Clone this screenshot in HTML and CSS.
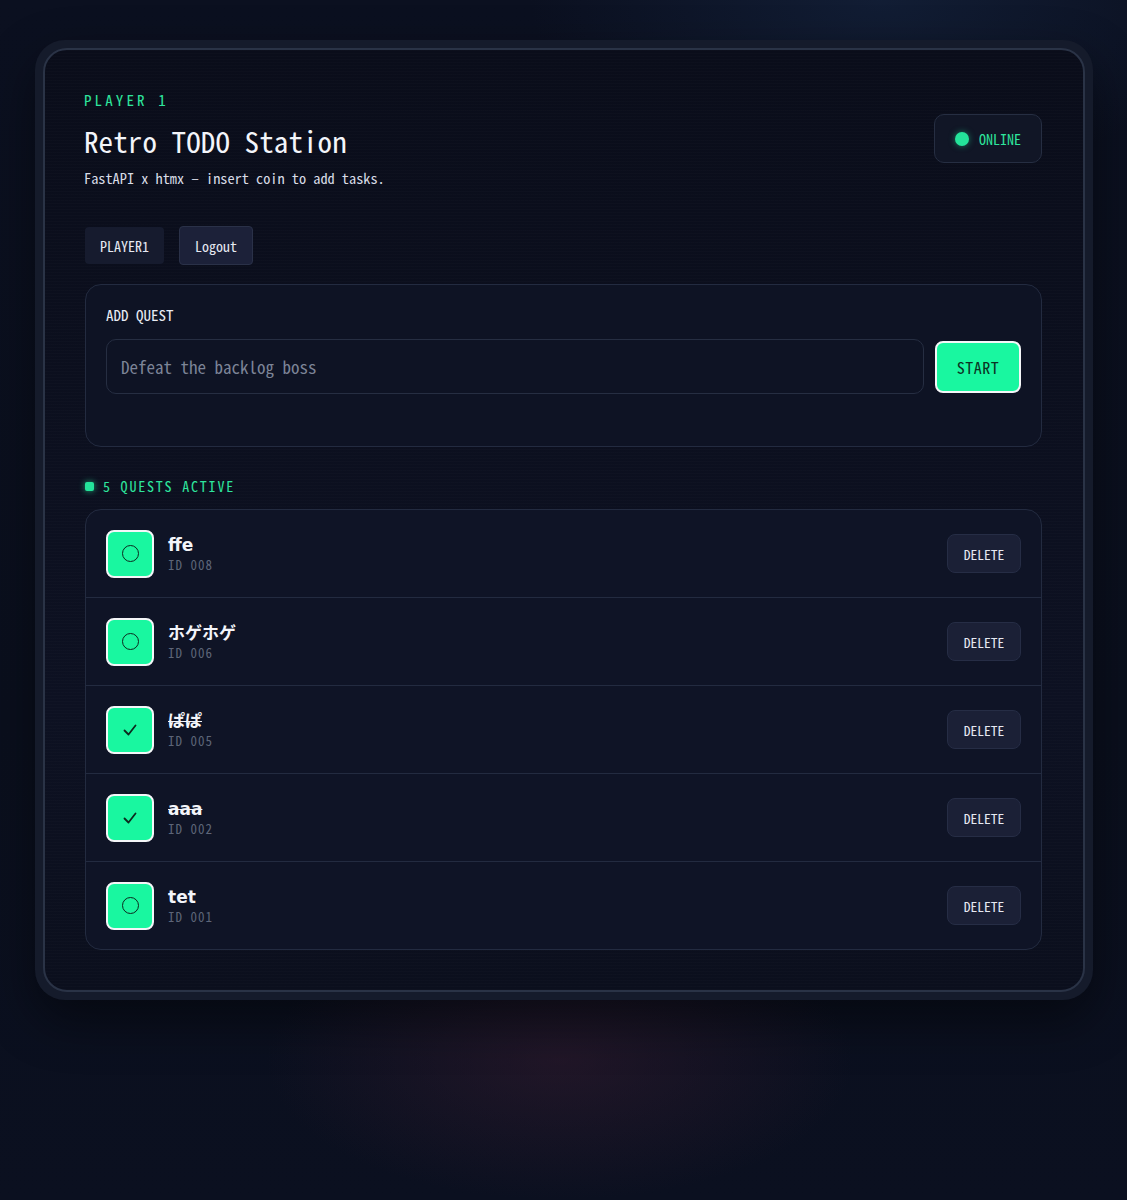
FILE: index.html
```html
<!DOCTYPE html>
<html lang="ja">
<head>
<meta charset="utf-8">
<title>Retro TODO Station</title>
<link rel="stylesheet" href="styles.css">
</head>
<body>
<main class="frame">
  <section class="panel">
    <header class="head">
      <div class="head-text">
        <div class="eyebrow">PLAYER 1</div>
        <h1 class="title">Retro TODO Station</h1>
        <p class="subtitle">FastAPI x htmx – insert coin to add tasks.</p>
      </div>
      <div class="status"><span class="status-dot"></span>ONLINE</div>
    </header>

    <div class="userbar">
      <span class="chip">PLAYER1</span>
      <button class="chip chip-btn">Logout</button>
    </div>

    <form class="add-card">
      <label class="add-label">ADD QUEST</label>
      <div class="add-row">
        <input class="add-input" type="text" placeholder="Defeat the backlog boss">
        <button class="start-btn" type="button">START</button>
      </div>
    </form>

    <div class="count"><span class="count-dot"></span>5 QUESTS ACTIVE</div>

    <ul class="list">
      <li class="item">
        <span class="check"><span class="ring"></span></span>
        <div class="item-text"><div class="item-title">ffe</div><div class="item-id">ID 008</div></div>
        <button class="del">DELETE</button>
      </li>
      <li class="item">
        <span class="check"><span class="ring"></span></span>
        <div class="item-text"><div class="item-title">ホゲホゲ</div><div class="item-id">ID 006</div></div>
        <button class="del">DELETE</button>
      </li>
      <li class="item">
        <span class="check"><svg class="tick" viewBox="0 0 20 20"><path d="M4.5 10.5 L8.5 14.5 L15.5 5.5"/></svg></span>
        <div class="item-text"><div class="item-title done">ぱぱ</div><div class="item-id">ID 005</div></div>
        <button class="del">DELETE</button>
      </li>
      <li class="item">
        <span class="check"><svg class="tick" viewBox="0 0 20 20"><path d="M4.5 10.5 L8.5 14.5 L15.5 5.5"/></svg></span>
        <div class="item-text"><div class="item-title done">aaa</div><div class="item-id">ID 002</div></div>
        <button class="del">DELETE</button>
      </li>
      <li class="item">
        <span class="check"><span class="ring"></span></span>
        <div class="item-text"><div class="item-title">tet</div><div class="item-id">ID 001</div></div>
        <button class="del">DELETE</button>
      </li>
    </ul>
  </section>
</main>
</body>
</html>
```

FILE: styles.css
```css
* { box-sizing: border-box; }
html, body { margin: 0; padding: 0; }
body {
  min-height: 1200px;
  background:
    radial-gradient(ellipse 420px 200px at 560px 1060px, rgba(60, 30, 50, 0.45), transparent 70%),
    radial-gradient(ellipse 500px 260px at 880px 0px, rgba(22, 38, 66, 0.6), transparent 70%),
    linear-gradient(180deg, #0b1020 0%, #0a0f1d 60%, #0b1020 100%);
  font-family: "Noto Sans Mono CJK JP", "DejaVu Sans Mono", monospace;
  color: #e6e9f2;
  padding: 40px 35px 0 35px;
}
.frame {
  border-radius: 30px;
  padding: 8px;
  background: #151b2b;
  box-shadow: 0 20px 50px rgba(0,0,0,0.45);
  width: 1058px;
}
.panel {
  border: 2px solid #2a3346;
  border-radius: 24px;
  background:
    repeating-linear-gradient(180deg, rgba(255,255,255,0.012) 0 1px, transparent 1px 3px),
    linear-gradient(180deg, #0a0d1a 0%, #0d1122 70%, #0b0f1d 100%);
  padding: 40px 41px 40px 40px;
}
.head {
  display: flex;
  justify-content: space-between;
  align-items: flex-start;
}
.eyebrow {
  color: #2ee59d;
  font-size: 15px;
  letter-spacing: 3.1px;
  line-height: 20px;
  margin-left: -1px;
}
.title {
  margin: 10px 0 0 -1px;
  font-size: 29px;
  font-weight: 500;
  line-height: 40px;
  color: #f3f5fa;
  letter-spacing: 0.1px;
}
.subtitle {
  margin: 8px 0 0 -1px;
  font-size: 14.3px;
  line-height: 20px;
  color: #d8dce6;
}
.status {
  margin-top: 24px;
  display: flex;
  align-items: center;
  gap: 10px;
  height: 49px;
  padding: 0 20px;
  border: 1px solid #262e42;
  border-radius: 10px;
  background: #111626;
  color: #2ee59d;
  font-size: 14px;
}
.status-dot {
  width: 14px; height: 14px; border-radius: 50%;
  background: #24e39a;
  box-shadow: 0 0 6px rgba(36,227,154,0.5);
}
.userbar {
  display: flex;
  gap: 15px;
  margin-top: 38px;
  align-items: center;
}
.chip {
  font-family: inherit;
  display: inline-flex;
  align-items: center;
  height: 37px;
  padding: 0 15px;
  border-radius: 4px;
  background: #161b2e;
  color: #e6e9f2;
  font-size: 14px;
  border: none;
}
.chip-btn {
  height: 39px;
  background: #1c2139;
  border: 1px solid #2a3148;
  border-radius: 4px;
}
.add-card {
  margin: 19px 0 0 0;
  border: 1px solid #232b40;
  border-radius: 16px;
  background: #0e1324;
  padding: 20px 20px 52px 20px;
}
.add-label {
  display: block;
  font-size: 15px;
  color: #e8ebf3;
  line-height: 20px;
}
.add-row {
  display: flex;
  gap: 11px;
  margin-top: 14px;
  align-items: center;
}
.add-input {
  flex: 1;
  height: 55px;
  border: 1px solid #262e42;
  border-radius: 10px;
  background: #0e1324;
  padding: 0 14px;
  font-family: inherit;
  font-size: 17px;
  color: #e6e9f2;
}
.add-input::placeholder { color: #7c8497; }
.start-btn {
  width: 86px;
  height: 52px;
  border: 2px solid #f4f6f8;
  border-radius: 8px;
  background: #19f7a0;
  color: #0b3323;
  font-family: inherit;
  font-size: 16px;
  letter-spacing: 0.5px;
}
.count {
  display: flex;
  align-items: center;
  gap: 9px;
  margin-top: 29px;
  color: #2ee59d;
  font-size: 14px;
  letter-spacing: 1.8px;
  line-height: 20px;
}
.count-dot {
  width: 9px; height: 9px; border-radius: 2px;
  background: #24e39a;
  box-shadow: 0 0 6px rgba(36,227,154,0.7);
}
.list {
  list-style: none;
  margin: 13px 0 0 0;
  padding: 0;
  border: 1px solid #232b40;
  border-radius: 16px;
  background: #0f1426;
  overflow: hidden;
}
.item {
  display: flex;
  align-items: center;
  height: 88px;
  padding: 0 20px;
  border-top: 1px solid #232b40;
}
.item:first-child { border-top: none; height: 87px; }
.check {
  width: 48px; height: 48px;
  border: 2px solid #f4f6f8;
  border-radius: 8px;
  background: #19f7a0;
  display: flex; align-items: center; justify-content: center;
  flex: none;
}
.ring {
  width: 17px; height: 17px;
  border: 1.5px solid #0c2a1e;
  border-radius: 50%;
}
.tick { width: 20px; height: 20px; }
.tick path { fill: none; stroke: #0c2a1e; stroke-width: 1.8; stroke-linecap: round; stroke-linejoin: round; }
.item-text { margin-left: 14px; flex: 1; }
.item-title {
  font-family: "DejaVu Sans", "Noto Sans CJK JP", sans-serif;
  font-weight: 700;
  font-size: 17px;
  line-height: 22px;
  color: #f3f5fa;
}
.item-title.done { text-decoration: line-through; text-decoration-thickness: 1px; }
.item-id {
  font-size: 13px;
  letter-spacing: 1px;
  color: #5d6578;
  line-height: 18px;
}
.del {
  width: 74px; height: 39px;
  border: 1px solid #262d45;
  border-radius: 8px;
  background: #1b2036;
  color: #e6e9f2;
  font-family: inherit;
  font-size: 13.5px;
}
```
